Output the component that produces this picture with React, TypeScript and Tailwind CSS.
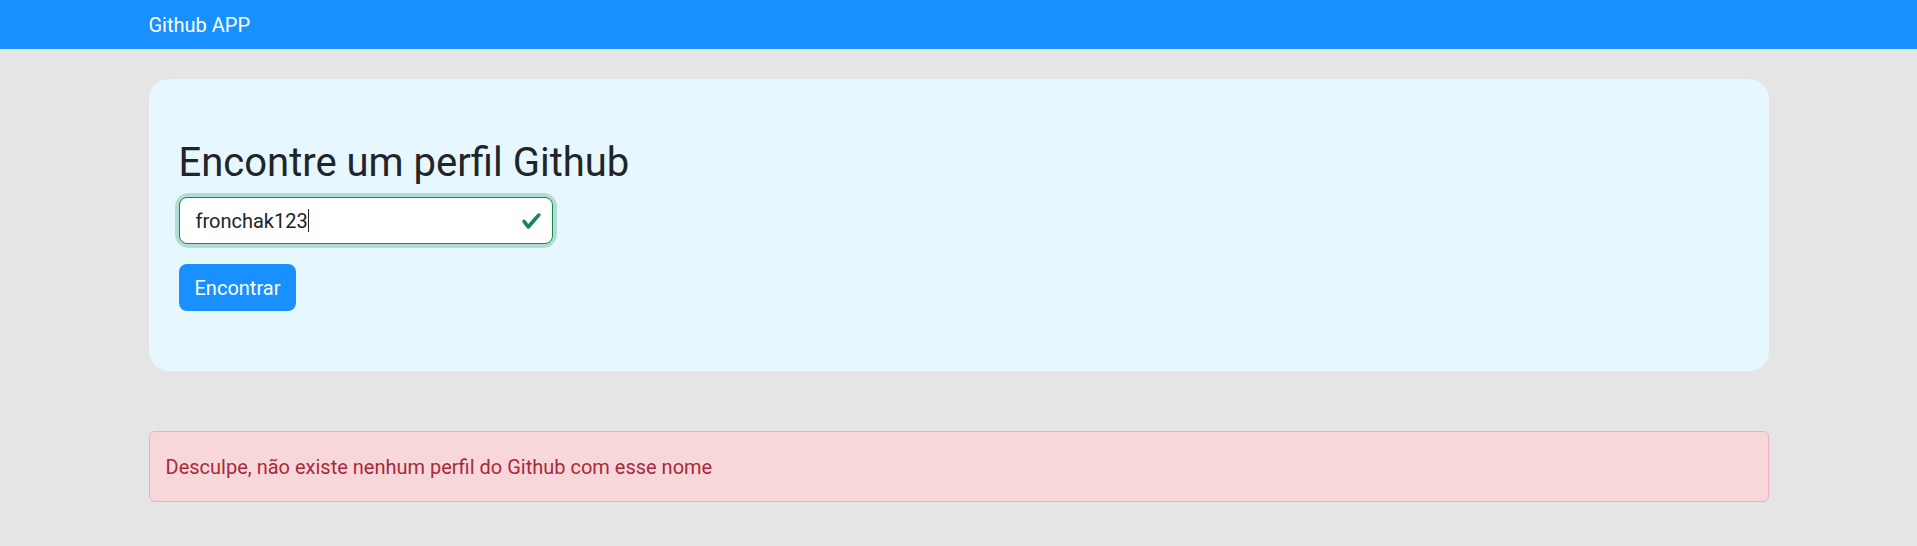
import React from 'react';

const CheckIcon: React.FC = () => (
  <svg className="w-[21px] h-[21px]" viewBox="0 0 8 8" xmlns="http://www.w3.org/2000/svg">
    <path
      fill="#198754"
      d="M2.3 6.73.6 4.53c-.4-1.04.46-1.4 1.1-.8l1.1 1.4 3.4-3.8c.6-.63 1.6-.27 1.2.7l-4 4.6c-.43.5-.8.4-1.1.1z"
    />
  </svg>
);

export default function App() {
  const username = 'fronchak123';

  return (
    <div className="min-h-screen bg-[#e5e5e5] font-['Roboto',sans-serif] text-[#212529]">
      <nav className="h-[49px] bg-[#1890ff]">
        <div className="w-[1620px] mx-auto h-full flex items-center">
          <span className="text-white text-[20px] leading-none">Github APP</span>
        </div>
      </nav>

      <main className="w-[1620px] mx-auto pt-[30px]">
        <section className="bg-[#e6f7ff] rounded-[20px] px-[30px] pt-[60px] pb-[60px]">
          <h1 className="text-[40px] leading-[48px] mb-[10px]">Encontre um perfil Github</h1>

          <div className="w-[374px] rounded-[10px] shadow-[0_0_0_4px_#b1dcd4]">
            <div className="relative h-[47px] flex items-center bg-white border border-[#198754] rounded-[8px] pl-4 pr-12">
              <span className="text-[20px] leading-none">{username}</span>
              <span className="inline-block w-px h-[23px] bg-[#212529]" />
              <span className="absolute right-[10px] top-1/2 -translate-y-1/2 flex">
                <CheckIcon />
              </span>
            </div>
          </div>

          <button
            type="button"
            className="mt-5 h-[47px] px-4 rounded-[8px] bg-[#1890ff] text-white text-[20px] leading-none"
          >
            Encontrar
          </button>
        </section>

        <div className="mt-[60px] h-[71px] flex items-center px-4 bg-[#f8d7da] border border-[#f1aeb5] rounded-[6px]">
          <span className="text-[20px] leading-none text-[#a82a3a]">
            Desculpe, não existe nenhum perfil do Github com esse nome
          </span>
        </div>
      </main>
    </div>
  );
}
